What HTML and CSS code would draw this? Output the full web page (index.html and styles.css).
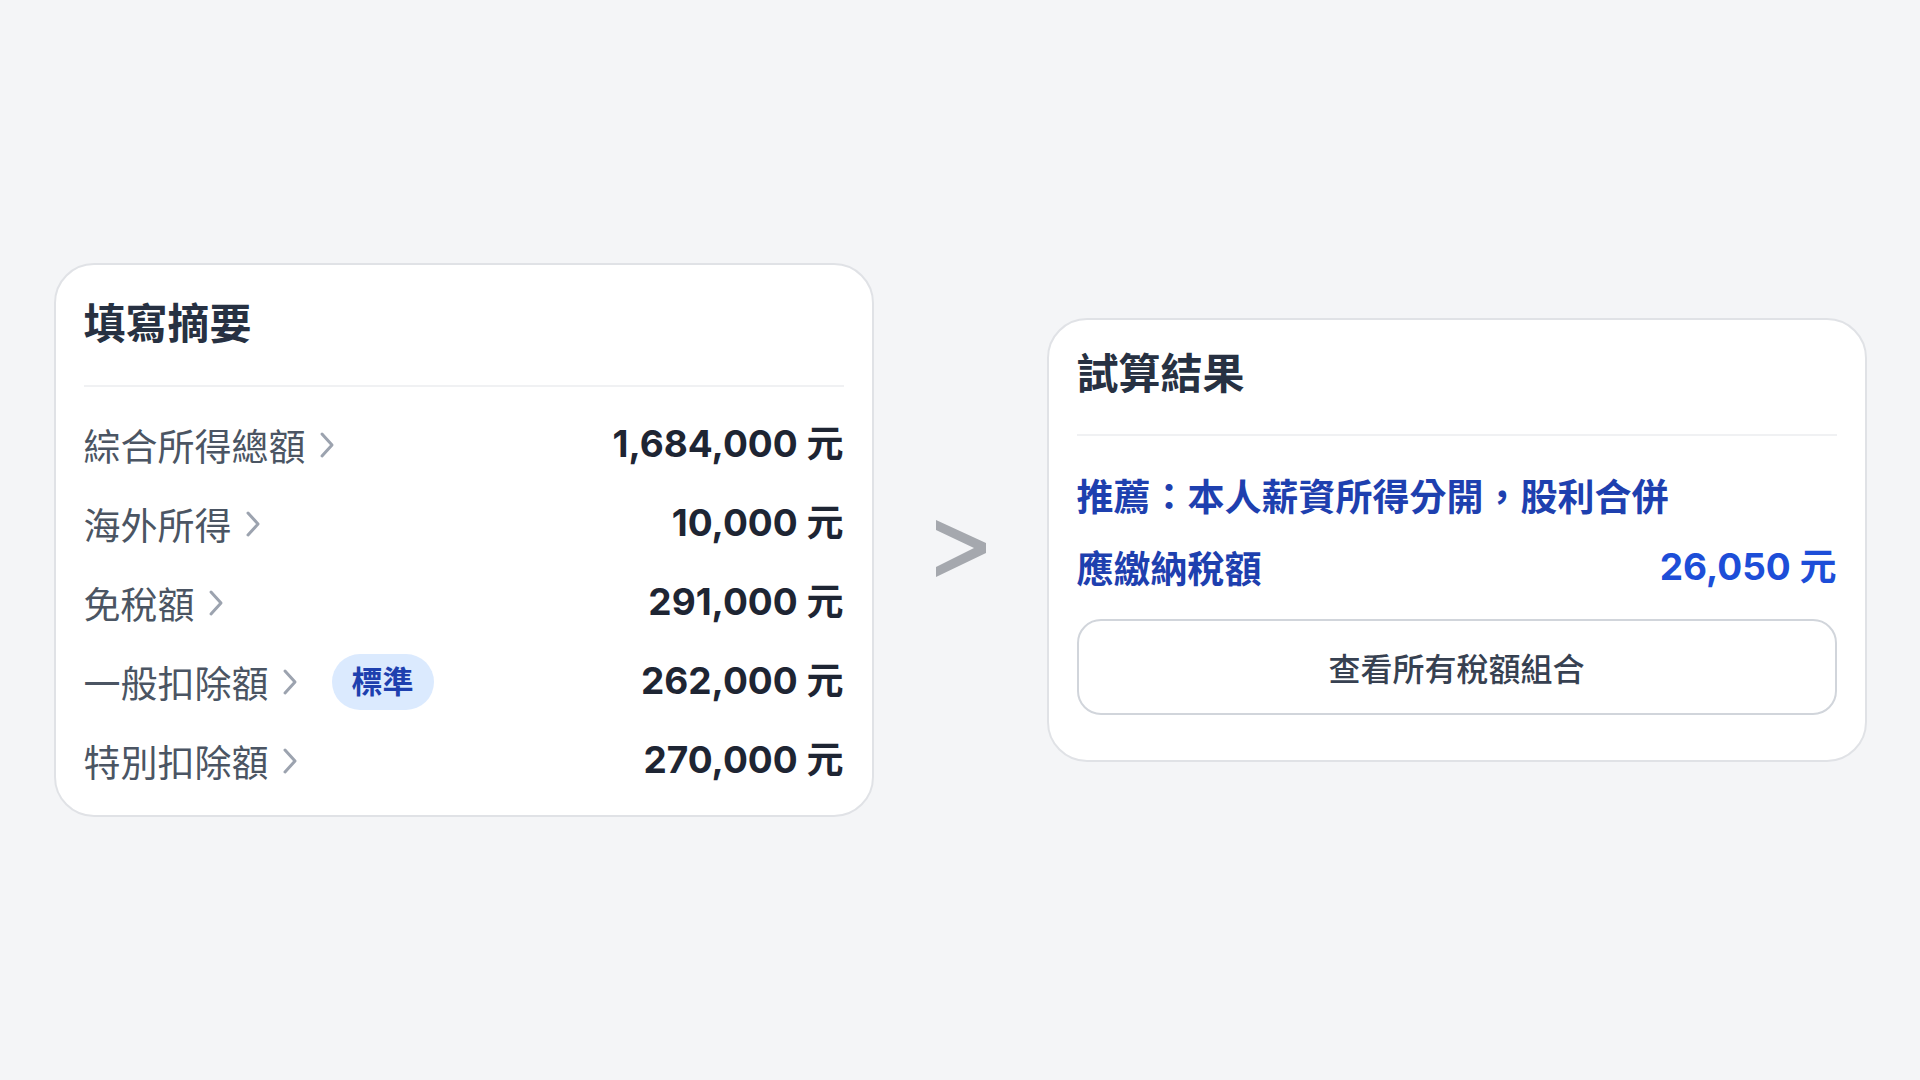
FILE: index.html
```html
<!DOCTYPE html>
<html lang="zh-Hant">
<head>
    <meta charset="UTF-8">
    <meta name="viewport" content="width=device-width, initial-scale=1.0">
    <title>試算結果</title>
    <link rel="stylesheet" href="styles.css">
</head>
<body>
    <main class="stage">
        <section class="card summary">
            <h2 class="card-title">填寫摘要</h2>
            <ul class="rows">
                <li class="row">
                    <span class="label">綜合所得總額<svg class="chev" viewBox="0 0 16 28"><polyline points="3,3 13,14 3,25"/></svg></span>
                    <span class="value">1,684,000 元</span>
                </li>
                <li class="row">
                    <span class="label">海外所得<svg class="chev" viewBox="0 0 16 28"><polyline points="3,3 13,14 3,25"/></svg></span>
                    <span class="value">10,000 元</span>
                </li>
                <li class="row">
                    <span class="label">免稅額<svg class="chev" viewBox="0 0 16 28"><polyline points="3,3 13,14 3,25"/></svg></span>
                    <span class="value">291,000 元</span>
                </li>
                <li class="row">
                    <span class="label">一般扣除額<svg class="chev" viewBox="0 0 16 28"><polyline points="3,3 13,14 3,25"/></svg><span class="badge">標準</span></span>
                    <span class="value">262,000 元</span>
                </li>
                <li class="row">
                    <span class="label">特別扣除額<svg class="chev" viewBox="0 0 16 28"><polyline points="3,3 13,14 3,25"/></svg></span>
                    <span class="value">270,000 元</span>
                </li>
            </ul>
        </section>

        <svg class="flow-arrow" viewBox="0 0 53 57">
            <polygon points="2,0 52,23 52,33 2,57 2,47 40,28 2,10"/>
        </svg>

        <section class="card result">
            <h2 class="card-title">試算結果</h2>
            <p class="advice">推薦：本人薪資所得分開，股利合併</p>
            <div class="tax-row">
                <span>應繳納稅額</span>
                <span class="tax-value">26,050 元</span>
            </div>
            <button type="button" class="all-btn">查看所有稅額組合</button>
        </section>
    </main>
</body>
</html>
```

FILE: styles.css
```css
body {
    margin: 0;
    background: #f4f5f7;
    font-family: "Inter", "Noto Sans CJK TC", sans-serif;
    color: #1f2937;
}
.stage {
    display: flex;
    align-items: center;
    justify-content: center;
    gap: 60px;
    height: 100vh;
}
.card {
    width: 820px;
    box-sizing: border-box;
    background: #ffffff;
    border: 2px solid #e0e2e6;
    border-radius: 40px;
    padding: 0 28px;
}
.card-title {
    margin: 0;
    font-size: 42px;
    line-height: 59px;
    font-weight: 700;
    color: #273142;
    border-bottom: 2px solid #f0f1f3;
}
.summary {
    padding-top: 29px;
    padding-bottom: 15px;
}
.summary .card-title {
    padding-bottom: 32px;
}
.rows {
    list-style: none;
    margin: 0;
    padding: 18px 0 0;
}
.row {
    display: flex;
    align-items: center;
    justify-content: space-between;
    height: 79px;
}
.label {
    display: flex;
    align-items: center;
    font-size: 37px;
    color: #4b5563;
}
.chev {
    width: 16px;
    height: 28px;
    margin-left: 13px;
    fill: none;
    stroke: #9ca3af;
    stroke-width: 3;
    stroke-linecap: round;
    stroke-linejoin: round;
}
.badge {
    margin-left: 34px;
    height: 56px;
    line-height: 56px;
    padding: 0 20px;
    border-radius: 28px;
    background: #dbeafe;
    color: #1e40af;
    font-size: 31px;
    font-weight: 700;
}
.value {
    margin-bottom: 7px;
    font-size: 37px;
    font-weight: 700;
    color: #1e2533;
}
.flow-arrow {
    width: 53px;
    height: 57px;
    margin-top: 16px;
    fill: #a5a8ae;
}
.result {
    padding-top: 24px;
    padding-bottom: 45px;
}
.result .card-title {
    padding-bottom: 31px;
}
.advice {
    margin: 37px 0 0;
    font-size: 37px;
    line-height: 50px;
    font-weight: 700;
    color: #1e40af;
}
.tax-row {
    display: flex;
    align-items: center;
    justify-content: space-between;
    margin-top: 19px;
    height: 50px;
    font-size: 37px;
    font-weight: 700;
    color: #1e40af;
}
.tax-value {
    margin-bottom: 7px;
    font-size: 37px;
    color: #1d4ed8;
}
.all-btn {
    display: block;
    width: 100%;
    height: 96px;
    margin-top: 27px;
    background: #ffffff;
    border: 2px solid #d1d5db;
    border-radius: 24px;
    font-family: inherit;
    font-size: 32px;
    font-weight: 500;
    color: #374151;
    cursor: pointer;
}
```
